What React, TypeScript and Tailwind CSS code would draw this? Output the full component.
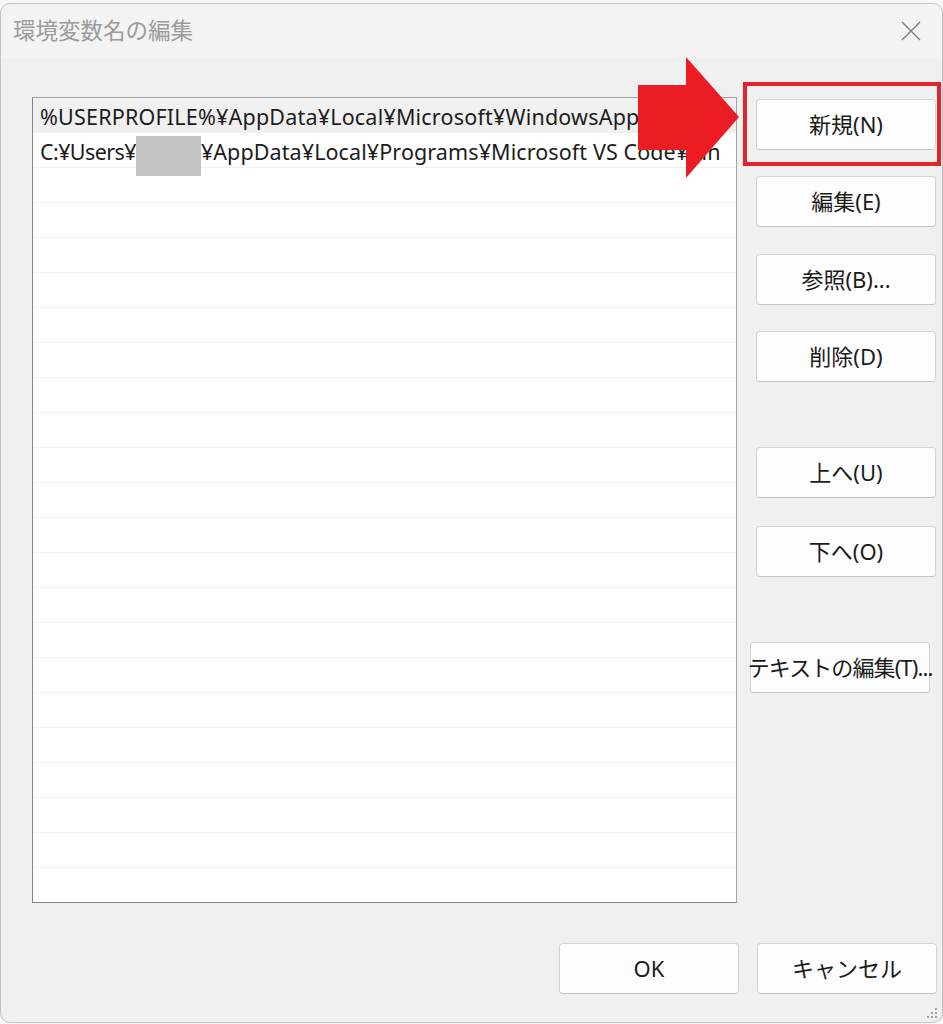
import React from "react";

const FONT = { fontFamily: '"Noto Sans", "Noto Sans CJK JP", sans-serif' };

function Btn({ label, className = "" }: { label: string; className?: string }) {
  return (
    <button
      className={
        "h-[51px] w-[180px] whitespace-nowrap rounded-[4px] border border-[#d3d3d3] border-b-[#c4c4c4] bg-[#fdfdfd] text-[22px] text-[#1b1b1b] flex items-center justify-center " +
        className
      }
    >
      {label}
    </button>
  );
}

export default function App() {
  const rows = Array.from({ length: 23 }, (_, i) => i);

  return (
    <div className="relative h-[1024px] w-[943px] overflow-hidden bg-[#f7f7f7] pt-[3px]" style={FONT}>
      <div className="relative flex h-[1020px] w-[943px] flex-col rounded-[10px] border border-[#c2c2c2] bg-[#f0f0f0]">
        {/* title bar */}
        <div className="flex h-[54px] items-center justify-between rounded-t-[10px] bg-[#f3f3f3] pl-[12px] pr-[21px]">
          <span className="text-[22.5px] text-[#9b9b9b]">環境変数名の編集</span>
          <svg width="20" height="20" viewBox="0 0 20 20">
            <path d="M1 1 L19 19 M19 1 L1 19" stroke="#7a7a7a" strokeWidth="1.3" fill="none" />
          </svg>
        </div>

        {/* body */}
        <div className="flex pl-[31px] pt-[39px]">
          <div className="h-[806px] w-[705px] overflow-hidden border border-[#a3a3a3] border-b-[#858585] border-l-[#858585] bg-white">
            {rows.map((i) => (
              <div
                key={i}
                className={
                  "flex h-[35px] items-center whitespace-nowrap border-b border-[#f0f0f0] pl-[7px] pt-[4px] text-[21.5px] text-[#1c1c1c] " +
                  (i === 0 ? "bg-[#f0f0f0]" : "")
                }
              >
                {i === 0 && <span className="tracking-[0.2px]">%USERPROFILE%¥AppData¥Local¥Microsoft¥WindowsApps</span>}
                {i === 1 && (
                  <>
                    <span className="tracking-[-0.6px]">C:¥Users¥</span>
                    <span className="relative top-[4px] inline-block h-[40px] w-[65px] bg-[#c3c3c3]" />
                    <span className="tracking-[0.1px]">¥AppData¥Local¥Programs¥Microsoft VS Code¥bin</span>
                  </>
                )}
              </div>
            ))}
          </div>

          <div className="ml-[19px] flex flex-col pt-[2px]">
            <Btn label="新規(N)" />
            <Btn label="編集(E)" className="mt-[26px]" />
            <Btn label="参照(B)..." className="mt-[27px]" />
            <Btn label="削除(D)" className="mt-[26px]" />
            <Btn label="上へ(U)" className="mt-[65px]" />
            <Btn label="下へ(O)" className="mt-[28px]" />
            <Btn label="テキストの編集(T)..." className="mt-[65px] -ml-[6px] text-[20px] tracking-[-0.9px]" />
          </div>
        </div>

        {/* footer */}
        <div className="mt-[40px] flex justify-end gap-[18px] pr-[5px]">
          <Btn label="OK" />
          <Btn label="キャンセル" />
        </div>

        {/* resize grip */}
        <svg className="absolute bottom-[2px] right-[3px]" width="12" height="12" viewBox="0 0 12 12" fill="#a0a0a0">
          <rect x="8" y="0" width="2" height="2" />
          <rect x="4" y="4" width="2" height="2" />
          <rect x="8" y="4" width="2" height="2" />
          <rect x="0" y="8" width="2" height="2" />
          <rect x="4" y="8" width="2" height="2" />
          <rect x="8" y="8" width="2" height="2" />
        </svg>
      </div>

      {/* red highlight frame */}
      <div className="absolute left-[743px] top-[82px] h-[84px] w-[198px] border-[4px] border-[#e2232b]" />

      {/* red arrow */}
      <svg className="absolute left-[638px] top-[57px]" width="101" height="122" viewBox="0 0 101 122">
        <polygon points="0,28 48,28 48,0 101,60 48,121 48,93 0,93" fill="#ec1c24" />
      </svg>
    </div>
  );
}
